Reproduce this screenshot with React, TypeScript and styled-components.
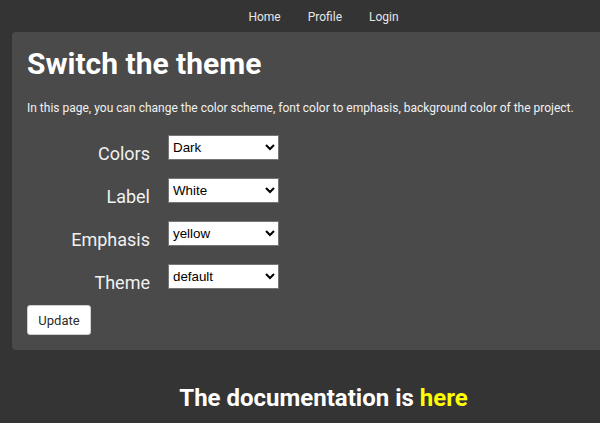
import React, { useState } from 'react';
import styled, { createGlobalStyle } from 'styled-components';

const GlobalStyle = createGlobalStyle`
  html, body {
    margin: 0;
    padding: 0;
    background-color: #343434;
    overflow: hidden;
  }
  body {
    font-family: Roboto, "Liberation Sans", sans-serif;
    color: #f1f1f1;
  }
`;

const Page = styled.div`
  width: 647px;
  min-height: 423px;
  background-color: #343434;
`;

const Nav = styled.nav`
  height: 32px;
  display: flex;
  justify-content: center;
  align-items: center;
`;

const NavLink = styled.a`
  color: #e6e6e6;
  font-size: 12px;
  line-height: 14px;
  padding: 1px 13.5px 0;
  text-decoration: none;
  cursor: pointer;
`;

const Panel = styled.section`
  margin: 0 12px;
  background-color: #4a4a4a;
  border-radius: 4px;
  padding: 14px 15px 15px;
`;

const Title = styled.h1`
  margin: 0;
  font-size: 30px;
  font-weight: 700;
  color: #ffffff;
  line-height: 35px;
`;

const Intro = styled.p`
  margin: 20px 0 20px;
  font-size: 12px;
  line-height: 14px;
  color: #f1f1f1;
`;

const Form = styled.div`
  display: grid;
  grid-template-columns: 123px 111px;
  column-gap: 18px;
  row-gap: 14px;
  align-items: start;
`;

const Label = styled.label`
  font-size: 18px;
  color: #f1f1f1;
  text-align: right;
  padding-top: 8px;
  line-height: 21px;
`;

const Select = styled.select`
  box-sizing: border-box;
  width: 111px;
  height: 25px;
  font-family: "Liberation Sans", Arial, sans-serif;
  font-size: 13.33px;
  color: #000;
  background-color: #fff;
  border: 1px solid #767676;
  border-radius: 0;
  padding: 0;
`;

const Button = styled.button`
  display: block;
  box-sizing: border-box;
  margin-top: 12px;
  width: 64px;
  height: 30px;
  background-color: #fff;
  border: 1px solid #d0d0d0;
  border-radius: 3px;
  font-family: Roboto, sans-serif;
  font-size: 13px;
  color: #2b2b2b;
  cursor: pointer;
`;

const Footer = styled.h2`
  margin: 0;
  padding-top: 34px;
  text-align: center;
  font-size: 24px;
  line-height: 28px;
  font-weight: 700;
  color: #ffffff;
`;

const Highlight = styled.a`
  color: #ffff00;
  text-decoration: none;
`;

type Field = { label: string; options: string[]; initial: string };

const fields: Field[] = [
  { label: 'Colors', options: ['Dark', 'Light'], initial: 'Dark' },
  { label: 'Label', options: ['White', 'Black'], initial: 'White' },
  { label: 'Emphasis', options: ['yellow', 'red', 'blue', 'green'], initial: 'yellow' },
  { label: 'Theme', options: ['default', 'classic'], initial: 'default' },
];

export default function App() {
  const [values, setValues] = useState<Record<string, string>>(
    Object.fromEntries(fields.map((f) => [f.label, f.initial]))
  );

  return (
    <Page>
      <GlobalStyle />
      <Nav>
        <NavLink>Home</NavLink>
        <NavLink>Profile</NavLink>
        <NavLink>Login</NavLink>
      </Nav>
      <Panel>
        <Title>Switch the theme</Title>
        <Intro>
          In this page, you can change the color scheme, font color to emphasis, background color of the project.
        </Intro>
        <Form>
          {fields.map((f) => (
            <React.Fragment key={f.label}>
              <Label>{f.label}</Label>
              <Select
                value={values[f.label]}
                onChange={(e) => setValues({ ...values, [f.label]: e.target.value })}
              >
                {f.options.map((o) => (
                  <option key={o} value={o}>
                    {o}
                  </option>
                ))}
              </Select>
            </React.Fragment>
          ))}
        </Form>
        <Button>Update</Button>
      </Panel>
      <Footer>
        The documentation is <Highlight>here</Highlight>
      </Footer>
    </Page>
  );
}
